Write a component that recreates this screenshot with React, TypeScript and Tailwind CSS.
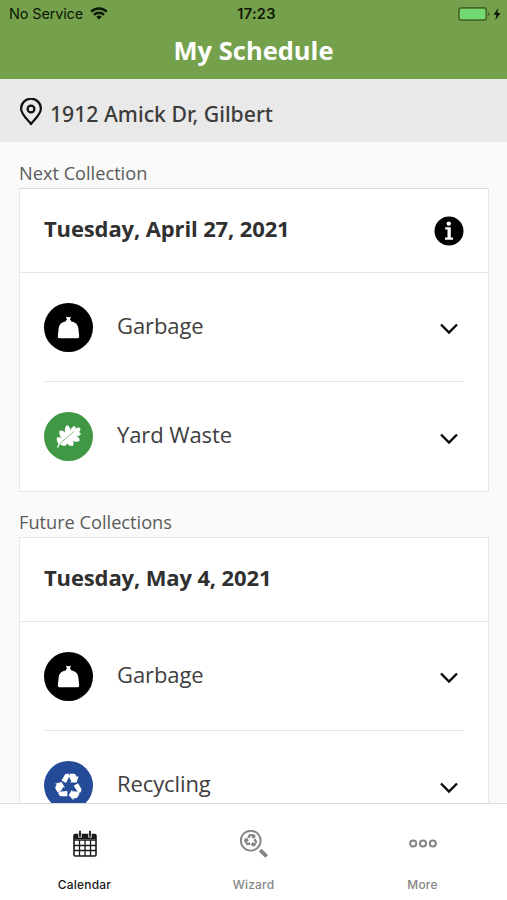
const sans = "font-['Open_Sans','Noto_Sans',sans-serif]";
const system = "font-['Inter','Roboto',sans-serif]";

function Wifi() {
  return (
    <svg width="18" height="13" viewBox="0 0 18 13" fill="none" stroke="#0b1705" strokeWidth="2.5">
      <path d="M1.2 4.7a11 11 0 0 1 15.6 0" />
      <path d="M4 7.9a7 7 0 0 1 10 0" />
      <path d="M9 12.5 6.3 9.8a3.9 3.9 0 0 1 5.4 0z" fill="#0b1705" stroke="none" />
    </svg>
  );
}

function Battery() {
  return (
    <svg width="44" height="14" viewBox="0 0 44 14">
      <rect x="0.8" y="0.8" width="27.6" height="12.4" rx="2.6" fill="none" stroke="#43682a" strokeWidth="1.5" />
      <rect x="2" y="2" width="25.2" height="10" rx="1.3" fill="#72d872" />
      <path d="M30 5v4.2q1.6-.5 1.6-2.1T30 5z" fill="#43682a" />
      <path d="M40.3 1 35.5 7.8h3l-1.2 5.4L42.5 6h-3.2z" fill="#071003" />
    </svg>
  );
}

function Pin() {
  return (
    <svg width="22" height="28" viewBox="0 0 22 28" fill="none" stroke="#111" strokeWidth="2.2">
      <path d="M11 26C8.5 22.4 1.1 17 1.1 10.6a9.9 9.9 0 0 1 19.8 0C20.9 17 13.5 22.4 11 26z" strokeLinejoin="round" />
      <circle cx="11" cy="11" r="3.4" />
    </svg>
  );
}

function Info() {
  return (
    <svg width="30" height="30" viewBox="0 0 30 30">
      <circle cx="15" cy="15" r="14.5" fill="#000" />
      <circle cx="14.8" cy="7.6" r="2.2" fill="#fff" />
      <path d="M11.2 11.2h5.600v10.400h2.200v2.200h-8v-2.200h2.500v-8.200h-2.300z" fill="#fff" />
    </svg>
  );
}

function Bag() {
  return (
    <svg width="23" height="23" viewBox="0 0 24 24" fill="#fff">
      <path d="M9.3.7q2.7 1 5.2 0L13.5 4.3h.9v1.2c5.200.9 7.600 3.800 7.900 7.700l.9 8q.1 2-1.800 2H2.600q-2 0-1.800-2l.9-8C2 9.300 4.500 6.400 9.500 5.500V4.300h1z" />
    </svg>
  );
}

function OakLeaf() {
  return (
    <svg width="25" height="25" viewBox="0 0 24 24">
      <path
        d="M1 22.500 2.400 19C.9 17 .3 14.800.9 13c1.400-.6 3-.5 4.300.3C3.300 11 2.700 8.500 3.300 6.500c2-.6 4.200.2 5.400 2C8.200 5.500 8.700 3 10.300 1.200c2.200.4 3.600 2.300 3.500 5C14.500 3.800 16 2.400 18 2c.8.800 1 1.600.8 2.500 1.500-1.200 3-1.300 4.400-.7.6 1.600.1 2.900-1.300 3.800 1 .2 1.700.8 2 1.800-.8 1.800-2.600 2.700-5.100 2.400 2.600.5 4 1.900 4 4-2 1.700-4.700 1.700-7 0 1.500 1.700 1.500 3.500.2 5.200-2.500.2-4.500-.8-5.500-2.800 0 1.300-.6 2.200-1.700 2.700-2 .1-3.700-.5-5-1.800L2 22.800z"
        fill="#fff"
      />
      <path d="M3.5 18.800 17.500 7" stroke="#409844" strokeWidth=".6" fill="none" />
    </svg>
  );
}

function RecycleArrows({ size }: { size: number }) {
  return (
    <svg width={size} height={size} viewBox="0 0 24 24" fill="currentColor">
      {[0, 120, 240].map((angle) => (
        <g key={angle} transform={`rotate(${angle} 12 12.5)`}>
          <path d="M5.6 7.2 8.2 2.7Q8.8 1.6 10 1.6h1.800l.7 1.300-3 6.500z" />
          <path d="M12.7 1.6H16q1.2 0 1.8 1l.9 1.600 1.500-.9L18.600 9h-6l1.500-.9-2-3.800z" />
        </g>
      ))}
    </svg>
  );
}

function Chevron() {
  return (
    <svg width="18" height="12" viewBox="0 0 18 12" fill="none" stroke="#0a0a0a" strokeWidth="2.4">
      <path d="m1 1.5 8 8 8-8" />
    </svg>
  );
}

function CalendarIcon() {
  return (
    <svg width="26" height="28" viewBox="0 0 26 28" fill="none" stroke="#1a1a1a">
      <path d="M2 4h22v5H2z" fill="#1a1a1a" stroke="none" />
      <rect x="2" y="4.5" width="22" height="21.5" rx="1.2" strokeWidth="1.6" />
      <path d="M7.5 10v16M13 10v16M18.5 10v16M2 10h22M2 15.5h22M2 20.5h22" strokeWidth="1.3" />
      <path d="M8 4v3.5M18 4v3.5" stroke="#fff" strokeWidth="3.4" />
      <path d="M8 .8v6M18 .8v6" strokeWidth="1.8" />
    </svg>
  );
}

function WizardIcon() {
  return (
    <div className="relative h-7 w-7 text-[#858585]">
      <svg width="28" height="28" viewBox="0 0 28 28" fill="none" stroke="currentColor">
        <circle cx="10.7" cy="10.7" r="9.9" strokeWidth="1.9" />
        <path d="m20.2 20.2 6.5 6.3" strokeWidth="3.8" />
      </svg>
      <div className="absolute left-1 top-[3px]"><RecycleArrows size={14} /></div>
    </div>
  );
}

function MoreIcon() {
  return (
    <svg width="28" height="10" viewBox="0 0 28 10" fill="none" stroke="#858585" strokeWidth="2">
      <circle cx="4.2" cy="4.5" r="3.1" />
      <circle cx="14" cy="4.5" r="3.1" />
      <circle cx="23.8" cy="4.5" r="3.1" />
    </svg>
  );
}

type Kind = "garbage" | "yard" | "recycling";

const disc: Record<Kind, string> = {
  garbage: "bg-black",
  yard: "bg-[#409844]",
  recycling: "bg-[#234b98]",
};

function Row({ kind, label, divided = false }: { kind: Kind; label: string; divided?: boolean }) {
  return (
    <div className={`mx-6 flex h-[109px] items-center ${divided ? "border-b border-[#e6e6e6]" : ""}`}>
      <div className={`flex size-[49px] items-center justify-center rounded-full text-white ${disc[kind]}`}>
        {kind === "garbage" && <Bag />}
        {kind === "yard" && <OakLeaf />}
        {kind === "recycling" && <RecycleArrows size={28} />}
      </div>
      <span className="ml-6 pb-[5px] text-[22px] leading-[30px] tracking-[-0.1px] text-[#404040]">{label}</span>
      <div className="ml-auto mr-1.5 pt-1"><Chevron /></div>
    </div>
  );
}

function CardHeader({ date, info = false }: { date: string; info?: boolean }) {
  return (
    <div className="flex h-[84px] items-center justify-between border-b border-[#e6e6e6] px-6">
      <h2 className="pb-1.5 text-[22px] font-bold leading-[30px] tracking-[-0.13px] text-[#303030]">{date}</h2>
      {info && <Info />}
    </div>
  );
}

export default function App() {
  return (
    <div className={`flex h-[900px] w-[507px] flex-col overflow-hidden bg-[#fafafa] ${sans}`}>
      <header className="h-[79px] shrink-0 bg-[#75a14c]">
        <div className={`grid h-[27px] grid-cols-3 items-center pl-[9px] pr-[5px] text-[14.5px] text-[#0b1705] ${system}`}>
          <div className="flex items-center gap-[7px]">
            <span className="tracking-[-0.15px]">No Service</span>
            <Wifi />
          </div>
          <span className="pl-0.5 text-center font-semibold tracking-[0.3px]">17:23</span>
          <div className="flex justify-end"><Battery /></div>
        </div>
        <h1 className="pt-1.5 text-center text-[25.5px] font-bold leading-[34px] text-white">My Schedule</h1>
      </header>
      <div className="flex h-[63px] shrink-0 items-center gap-2 bg-[#e9e9e9] pl-5">
        <div className="pt-0.5"><Pin /></div>
        <span className="pt-1.5 font-['Noto_Sans','Open_Sans',sans-serif] text-[21.2px] font-medium leading-[30px] text-[#3c3c3c]">1912 Amick Dr, Gilbert</span>
      </div>
      <main className="min-h-0 flex-1 overflow-hidden pl-[19px] pr-[18px]">
        <h3 className="h-[46px] pt-[19px] text-[18.2px] leading-6 text-[#5c5c5c]">Next Collection</h3>
        <section className="border border-[#e6e6e6] border-t-[#dadada] bg-white">
          <CardHeader date="Tuesday, April 27, 2021" info />
          <Row kind="garbage" label="Garbage" divided />
          <Row kind="yard" label="Yard Waste" />
        </section>
        <h3 className="h-[45px] pt-[18px] text-[18.2px] leading-6 text-[#5c5c5c]">Future Collections</h3>
        <section className="border border-[#e6e6e6] bg-white">
          <CardHeader date="Tuesday, May 4, 2021" />
          <Row kind="garbage" label="Garbage" divided />
          <Row kind="recycling" label="Recycling" />
        </section>
      </main>
      <nav className={`grid h-[97px] shrink-0 grid-cols-3 border-t border-[#dcdcdc] bg-white text-[12px] font-medium text-[#858585] ${system}`}>
        <div className="flex flex-col items-center pt-[26px] text-[#1a1a1a]">
          <div className="flex h-7 items-center"><CalendarIcon /></div>
          <span className="mt-[18px] leading-[18px] tracking-[0.2px]">Calendar</span>
        </div>
        <div className="flex flex-col items-center pt-[26px]">
          <WizardIcon />
          <span className="mt-[18px] leading-[18px] tracking-[0.2px]">Wizard</span>
        </div>
        <div className="flex flex-col items-center pt-[26px]">
          <div className="flex h-7 items-center"><MoreIcon /></div>
          <span className="mt-[18px] leading-[18px] tracking-[0.2px]">More</span>
        </div>
      </nav>
    </div>
  );
}
